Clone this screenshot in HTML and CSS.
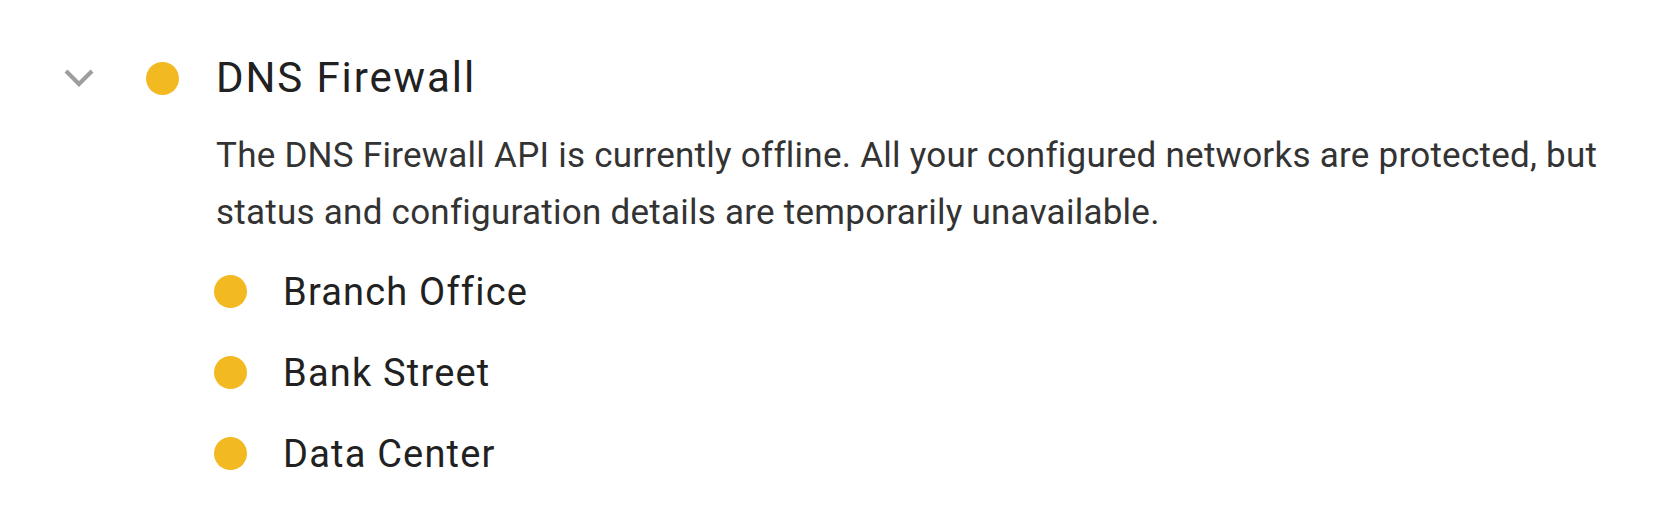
FILE: index.html
```html
<!DOCTYPE html>
<html lang="en">
<head>
<meta charset="utf-8">
<title>DNS Firewall</title>
<link rel="stylesheet" href="styles.css">
</head>
<body>
<section class="service">
  <div class="service-head">
    <span class="chevron">
      <svg width="32" height="22" viewBox="0 0 32 22"><path d="M3 4 L16 17 L29 4" fill="none" stroke="#9e9e9e" stroke-width="4.2"/></svg>
    </span>
    <span class="dot"></span>
    <h2 class="service-title">DNS Firewall</h2>
  </div>
  <div class="service-body">
    <p class="service-msg">The DNS Firewall API is currently offline. All your configured networks are protected, but status and configuration details are temporarily unavailable.</p>
    <ul class="networks">
      <li class="network"><span class="dot"></span><span class="network-name">Branch Office</span></li>
      <li class="network"><span class="dot"></span><span class="network-name">Bank Street</span></li>
      <li class="network"><span class="dot"></span><span class="network-name">Data Center</span></li>
    </ul>
  </div>
</section>
</body>
</html>
```
FILE: styles.css
```css
html, body {
  margin: 0;
  padding: 0;
  background: #ffffff;
}
body {
  font-family: Roboto, "Noto Sans", sans-serif;
  color: #212121;
}
.service {
  padding: 50px 0 0 0;
}
.service-head {
  display: flex;
  align-items: center;
  height: 56px;
}
.chevron {
  display: flex;
  width: 32px;
  height: 22px;
  margin-left: 63px;
}
.dot {
  display: block;
  flex: none;
  width: 33px;
  height: 33px;
  border-radius: 50%;
  background: #f2b920;
}
.service-head .dot {
  margin-left: 51px;
}
.service-title {
  margin: 0 0 0 37px;
  font-size: 42px;
  font-weight: 400;
  line-height: 56px;
  letter-spacing: 1.9px;
  color: #212121;
}
.service-body {
  padding-left: 216px;
  padding-top: 21px;
}
.service-msg {
  margin: 0;
  font-size: 35px;
  line-height: 57px;
  letter-spacing: 0.25px;
  color: #333333;
  max-width: 1420px;
}
.networks {
  list-style: none;
  margin: 10px 0 0 0;
  padding: 0;
}
.network {
  display: flex;
  align-items: center;
  height: 81px;
}
.network .dot {
  margin-left: -2px;
}
.network-name {
  margin-left: 36px;
  font-size: 38px;
  letter-spacing: 1.2px;
  color: #212121;
}
```
